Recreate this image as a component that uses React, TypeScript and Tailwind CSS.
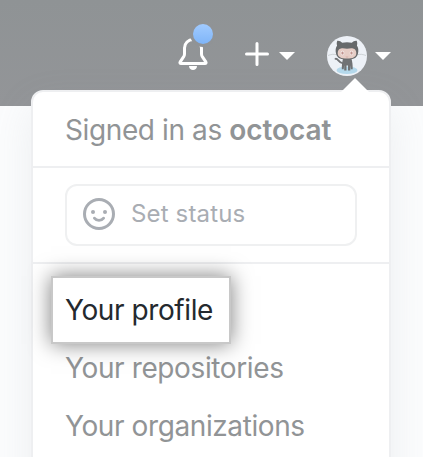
function Bell() {
  return (
    <svg className="h-[46px] w-[36px]" viewBox="0 0 36 46" fill="none">
      <defs>
        <linearGradient id="dot" x1="0" y1="0" x2="0" y2="1">
          <stop offset="0" stopColor="#a1cbff" />
          <stop offset="1" stopColor="#7fb5f8" />
        </linearGradient>
      </defs>
      <path
        d="M16 15.5a8.500 8.500 0 0 0-8.500 8.500v5.900c0 1-.3 1.900-.8 2.700l-3.500 5.200c-.7 1.100 0 1.700.8 1.700h24c.8 0 1.500-.6.8-1.700l-3.500-5.200c-.5-.8-.8-1.700-.8-2.700V24a8.500 8.500 0 0 0-8.500-8.500Z"
        stroke="#fff"
        strokeWidth="3"
      />
      <path d="M12 42h8c0 5.300-8 5.300-8 0Z" fill="#fff" />
      <circle cx="26" cy="10" r="13" fill="#909396" />
      <circle cx="26" cy="10" r="10" fill="url(#dot)" />
    </svg>
  );
}

function Caret() {
  return (
    <svg className="h-2 w-4" viewBox="0 0 16 8">
      <path d="M0 0h16L8 8Z" fill="#fff" />
    </svg>
  );
}

function Avatar() {
  return (
    <svg className="size-10 rounded-full" viewBox="0 0 40 40" fill="none">
      <rect width="40" height="40" fill="#edf1f7" />
      <ellipse cx="20" cy="34.200" rx="10.500" ry="3.800" fill="#b5d9ec" />
      <path d="M1 19.500c3-1.200 6-1.500 9-.7M39 19.500c-3-1.200-6-1.500-9-.7" stroke="#c5cace" strokeWidth=".8" />
      <path d="M8.500 22.800c3-.5 2.500 4 7.500 4.500" stroke="#737578" strokeWidth="1.800" strokeLinecap="round" />
      <path d="M16.500 21.500h7.500c1.600 4 1.700 8 1.700 11.700h-1.900l-.5-4v5.300h-2.300v-5h-1.500v5h-2.300v-5.300l-.5 4h-1.900c0-3.700.2-7.700 1.700-11.700Z" fill="#707275" />
      <path d="M10.300 4.800c1.600-.4 3.600.7 4.900 2 3.100-.7 6.500-.7 9.600 0 1.300-1.300 3.300-2.400 4.900-2 .7 1.700.7 3.300.2 4.800 1.500 2 1.800 4.700 1.100 8-1 4.500-4.500 6-11 6s-10-1.500-11-6c-.7-3.300-.4-6 1.100-8-.5-1.500-.5-3.100.2-4.800Z" fill="#66696b" />
      <path d="M14 12.500c2-.5 4 .2 6 .2s4-.7 6-.2c2.200.5 3.300 2.300 3.300 4.500 0 4.200-3.300 5.600-9.300 5.600s-9.300-1.400-9.300-5.600c0-2.200 1.100-4 3.300-4.500Z" fill="#e6cdc6" />
      <ellipse cx="15.500" cy="17" rx="1.900" ry="2.500" fill="#f1e5e3" />
      <ellipse cx="24.500" cy="17" rx="1.900" ry="2.500" fill="#f1e5e3" />
      <ellipse cx="15.500" cy="17" rx="1.100" ry="1.600" fill="#c0938f" />
      <ellipse cx="24.500" cy="17" rx="1.100" ry="1.600" fill="#c0938f" />
      <path d="M18.800 20.800q1.200.8 2.400 0" stroke="#c0938f" strokeWidth=".5" />
    </svg>
  );
}

function Smiley() {
  return (
    <svg className="size-8" viewBox="0 0 32 32" fill="none">
      <circle cx="16" cy="16" r="14.500" stroke="#a9adb3" strokeWidth="3" />
      <circle cx="10" cy="14" r="2" fill="#a9adb3" />
      <circle cx="22" cy="14" r="2" fill="#a9adb3" />
      <path d="M11.400 20.200c2.200 2.900 7 2.900 9.200 0" stroke="#a9adb3" strokeWidth="2.800" strokeLinecap="round" />
    </svg>
  );
}

export default function App() {
  return (
    <div className="relative h-[457px] w-[423px] overflow-hidden bg-[#fbfcfd] font-['Inter','Liberation_Sans',sans-serif] text-[28px] leading-[34px] text-[#919496]">
      <header className="flex h-[106px] items-start bg-linear-to-b from-[#8f9395] to-[#939598] pl-[177px]">
        <div className="mt-6">
          <Bell />
        </div>
        <div className="mt-[42px] ml-8 flex items-center gap-[10px]">
          <svg className="size-6" viewBox="0 0 24 24">
            <path d="M12 1.500v21M1.500 12h21" stroke="#fff" strokeWidth="3" strokeLinecap="round" />
          </svg>
          <div className="mt-1">
            <Caret />
          </div>
        </div>
        <div className="mt-9 ml-8 flex items-center gap-2">
          <Avatar />
          <Caret />
        </div>
      </header>

      <div className="absolute top-[90px] left-[31px] h-[400px] w-[360px] rounded-xl border-2 border-[#eeeff1] bg-white shadow-[0_16px_40px_rgba(149,157,165,0.14)]">
        <svg className="absolute -top-[14px] right-5 h-[15px] w-7" viewBox="0 0 28 15">
          <path d="M0 15v-1L14 0l14 14v1Z" fill="#fff" />
        </svg>
        <div className="flex h-[76px] items-center border-b-2 border-[#eeeff1] px-8 pt-px whitespace-pre">
          <span className="tracking-[-0.39px]">Signed in as </span>
          <span className="font-semibold tracking-[-0.1px]">octocat</span>
        </div>
        <div className="h-24 border-b-2 border-[#eeeff1] px-8 pt-4">
          <div className="flex h-[62px] items-center gap-4 rounded-xl border-2 border-[#eff0f1] pb-0.5 pl-4 text-2xl text-[#a9adb3]">
            <Smiley />
            <span className="-mt-px tracking-[0.15px]">Set status</span>
          </div>
        </div>
        <nav className="flex flex-col items-start pt-3">
          <a className="relative z-10 -mb-[5px] ml-[18px] flex h-[68px] w-[180px] items-center border-2 border-[#c8c8c8] bg-white pl-3 whitespace-nowrap text-[#24292e] shadow-[0_0_20px_rgba(0,0,0,0.5)]">
            <span className="tracking-[-0.41px]">Your profile</span>
          </a>
          <a className="flex h-[58px] items-center pl-8">
            <span className="tracking-[-0.38px]">Your repositories</span>
          </a>
          <a className="flex h-[58px] items-center pl-8">
            <span className="tracking-[-0.4px]">Your organizations</span>
          </a>
        </nav>
      </div>
    </div>
  );
}
